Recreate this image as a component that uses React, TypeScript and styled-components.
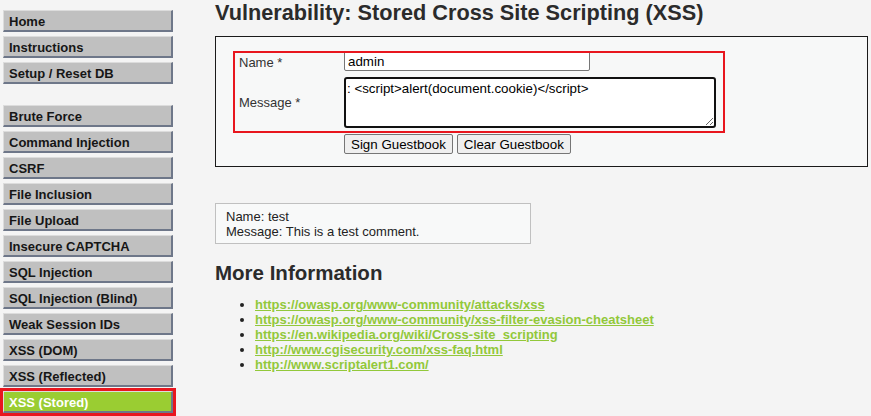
import styled, { createGlobalStyle } from "styled-components";

const GlobalStyle = createGlobalStyle`
  body {
    margin: 0;
    background: #f4f4f4;
    font: 13px "Liberation Sans", Arial, sans-serif;
    color: #222;
  }
`;

const menuTop = ["Home", "Instructions", "Setup / Reset DB"];
const menuVulns = [
  "Brute Force",
  "Command Injection",
  "CSRF",
  "File Inclusion",
  "File Upload",
  "Insecure CAPTCHA",
  "SQL Injection",
  "SQL Injection (Blind)",
  "Weak Session IDs",
  "XSS (DOM)",
  "XSS (Reflected)",
  "XSS (Stored)",
];

const links = [
  "https://owasp.org/www-community/attacks/xss",
  "https://owasp.org/www-community/xss-filter-evasion-cheatsheet",
  "https://en.wikipedia.org/wiki/Cross-site_scripting",
  "http://www.cgisecurity.com/xss-faq.html",
  "http://www.scriptalert1.com/",
];

const Page = styled.div`
  display: flex;
  align-items: flex-start;
`;

const Sidebar = styled.nav`
  width: 170px;
  padding: 10px 0 0 3px;
  margin-right: 42px;
  flex-shrink: 0;
`;

const MenuGroup = styled.ul<{ $spaced?: boolean }>`
  list-style: none;
  margin: ${(p) => (p.$spaced ? "21px" : "0")} 0 0 0;
  padding: 0;
`;

const MenuItem = styled.li<{ $selected?: boolean }>`
  box-sizing: border-box;
  width: 170px;
  padding: 3px 0 0 5px;
  line-height: 16px;
  margin-bottom: 4px;
  font-weight: bold;
  background: ${(p) => (p.$selected ? "#9acd32" : "#c0c0c0")};
  color: ${(p) => (p.$selected ? "#fff" : "#161616")};
  border-top: 1px solid #dcdcdc;
  border-left: 1px solid #dcdcdc;
  border-right: 2px solid #6e7789;
  border-bottom: 2px solid #6e7789;
  outline: ${(p) => (p.$selected ? "3px solid #e8161e" : "none")};
`;

const Main = styled.main`
  flex: 1;
`;

const Title = styled.h1`
  margin: 0;
  font-size: 21.7px;
  line-height: 26px;
  font-weight: bold;
  color: #2b2b2b;
`;

const FormBox = styled.div`
  box-sizing: border-box;
  width: 653px;
  height: 131px;
  margin-top: 10px;
  padding: 16px 0 0 19px;
  border: 1px solid #1a1a1a;
  background: #f7f8f8;
`;

const Highlight = styled.div`
  width: 488px;
  padding-bottom: 3px;
  outline: 2px solid #e8161e;
`;

const FieldRow = styled.div<{ $gap?: number }>`
  display: grid;
  grid-template-columns: 109px auto;
  align-items: center;
  margin-top: ${(p) => p.$gap ?? 0}px;
`;

const Label = styled.label`
  padding-left: 4px;
  color: #333;
`;

const TextInput = styled.input`
  box-sizing: border-box;
  width: 246px;
  height: 20px;
  margin-top: -2px;
  padding: 1px 3px;
  border: 1px solid #767676;
  border-radius: 2px;
  background: #fff;
  font: 13.33px "Liberation Sans", Arial, sans-serif;
  color: #000;
`;

const MessageInput = styled.textarea`
  box-sizing: border-box;
  width: 372px;
  height: 51px;
  padding: 2px 1px;
  border: 2px solid #111;
  border-radius: 3px;
  background: #fff;
  font: 13.33px "Liberation Sans", Arial, sans-serif;
  color: #000;
  outline: none;
`;

const ButtonRow = styled.div`
  display: flex;
  gap: 4px;
  margin-top: 3px;
  padding-left: 109px;
`;

const Button = styled.button`
  height: 20px;
  padding: 1px 6px;
  border: 1px solid #767676;
  border-radius: 2px;
  background: #efefef;
  font: 13.33px "Liberation Sans", Arial, sans-serif;
  color: #000;
`;

const Comment = styled.div`
  box-sizing: border-box;
  width: 316px;
  margin-top: 36px;
  padding: 5px 10px 4px;
  border: 1px solid #c0c0c0;
  background: #f8f9f9;
  line-height: 15px;
  color: #222;
`;

const SubTitle = styled.h2`
  margin: 17px 0 0;
  font-size: 20.5px;
  line-height: 24px;
  font-weight: bold;
  color: #2b2b2b;
`;

const LinkList = styled.ul`
  margin: 12px 0 0;
  padding-left: 40px;
  line-height: 15px;
`;

const Link = styled.a`
  font-weight: bold;
  color: #92c83a;
  text-decoration: underline;
`;

export default function App() {
  return (
    <Page>
      <GlobalStyle />
      <Sidebar>
        <MenuGroup>
          {menuTop.map((item) => (
            <MenuItem key={item}>{item}</MenuItem>
          ))}
        </MenuGroup>
        <MenuGroup $spaced>
          {menuVulns.map((item) => (
            <MenuItem key={item} $selected={item === "XSS (Stored)"}>
              {item}
            </MenuItem>
          ))}
        </MenuGroup>
      </Sidebar>
      <Main>
        <Title>Vulnerability: Stored Cross Site Scripting (XSS)</Title>
        <FormBox>
          <Highlight>
            <FieldRow>
              <Label>Name *</Label>
              <TextInput defaultValue="admin" />
            </FieldRow>
            <FieldRow $gap={6}>
              <Label>Message *</Label>
              <MessageInput defaultValue=": <script>alert(document.cookie)</script>" />
            </FieldRow>
          </Highlight>
          <ButtonRow>
            <Button>Sign Guestbook</Button>
            <Button>Clear Guestbook</Button>
          </ButtonRow>
        </FormBox>
        <Comment>
          Name: test
          <br />
          Message: This is a test comment.
        </Comment>
        <SubTitle>More Information</SubTitle>
        <LinkList>
          {links.map((href) => (
            <li key={href}>
              <Link href={href}>{href}</Link>
            </li>
          ))}
        </LinkList>
      </Main>
    </Page>
  );
}
